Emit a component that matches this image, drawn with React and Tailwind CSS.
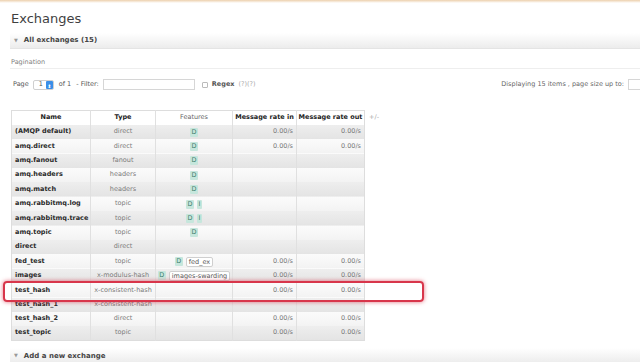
import React from 'react'

// ── Data ──────────────────────────────────────────────────────────────────────

const rows = [
  { name: '(AMQP default)', type: 'direct', feats: ['D'], rin: '0.00/s', rout: '0.00/s' },
  { name: 'amq.direct', type: 'direct', feats: ['D'], rin: '0.00/s', rout: '0.00/s' },
  { name: 'amq.fanout', type: 'fanout', feats: ['D'] },
  { name: 'amq.headers', type: 'headers', feats: ['D'] },
  { name: 'amq.match', type: 'headers', feats: ['D'] },
  { name: 'amq.rabbitmq.log', type: 'topic', feats: ['D', 'I'] },
  { name: 'amq.rabbitmq.trace', type: 'topic', feats: ['D', 'I'] },
  { name: 'amq.topic', type: 'topic', feats: ['D'] },
  { name: 'direct', type: 'direct', feats: [] },
  { name: 'fed_test', type: 'topic', feats: ['D'], policy: 'fed_ex', rin: '0.00/s', rout: '0.00/s' },
  { name: 'images', type: 'x-modulus-hash', feats: ['D'], policy: 'images-swarding', rin: '0.00/s', rout: '0.00/s' },
  { name: 'test_hash', type: 'x-consistent-hash', feats: [], rin: '0.00/s', rout: '0.00/s' },
  { name: 'test_hash_1', type: 'x-consistent-hash', feats: [] },
  { name: 'test_hash_2', type: 'direct', feats: [], rin: '0.00/s', rout: '0.00/s' },
  { name: 'test_topic', type: 'topic', feats: [], rin: '0.00/s', rout: '0.00/s' },
]

// ── Bits ──────────────────────────────────────────────────────────────────────

function Badge({ children }) {
  return (
    <span className="inline-block px-[1.5px] leading-[9px] bg-[#c6e6dc] text-[#3f7f6e] rounded-[1px]">
      {children}
    </span>
  )
}

function Policy({ children }) {
  return (
    <span className="inline-block px-[2px] leading-[8px] border border-[#cfcfcf] bg-white text-[#555] rounded-[2px] whitespace-nowrap">
      {children}
    </span>
  )
}

function SectionBar({ label }) {
  return (
    <div className="ml-[10px] h-[16px] flex items-center bg-gradient-to-b from-white to-[#ececec] border-b border-[#e4e4e4]">
      <span className="ml-[4px] text-[5px] text-[#999]">▼</span>
      <span className="ml-[6px] text-[7px] font-bold text-[#444]">{label}</span>
    </div>
  )
}

// ── Main ──────────────────────────────────────────────────────────────────────

export default function App() {
  return (
    <div className="w-[640px] h-[362px] overflow-hidden bg-white relative font-['DejaVu_Sans',sans-serif] text-[#444]">
      <div className="h-[3px] bg-gradient-to-b from-[#ecd0ad] to-white" />

      <h1 className="h-[30px] pt-[8px] pl-[11px] text-[13px] leading-[16px] text-[#3f3f3f]">Exchanges</h1>

      <SectionBar label="All exchanges (15)" />

      {/* Pagination */}
      <div className="ml-[10px] pt-[9px] pb-[2px] border-b border-[#eeeeee] text-[6.5px] leading-[8px] text-[#808080] pl-[1px]">
        Pagination
      </div>

      <div className="mt-[10px] h-[11px] flex items-center text-[6.5px] text-[#555]">
        <span className="ml-[13px]">Page</span>
        <span className="ml-[4px] w-[21px] h-[10px] flex items-center border border-[#d0d0d0] rounded-[2px] bg-white">
          <span className="ml-[5px]">1</span>
          <span className="ml-auto w-[7px] h-full bg-[#3b8fe8] rounded-[1px] text-white text-[5px] leading-[10px] text-center">⬍</span>
        </span>
        <span className="ml-[5px]">of 1</span>
        <span className="ml-[5px]">- Filter:</span>
        <span className="ml-[4px] w-[92px] h-[11px] border border-[#d6d6d6] bg-white" />
        <span className="ml-[7px] w-[6px] h-[6px] border border-[#bbb] bg-white rounded-[1px]" />
        <span className="ml-[4px] font-bold text-[#555]">Regex</span>
        <span className="ml-[4px] text-[#aaa]">(?)(?)</span>
        <span className="ml-auto text-[#666]">Displaying 15 items , page size up to:</span>
        <span className="ml-[4px] w-[12px] h-[11px] border border-r-0 border-[#d6d6d6] bg-white" />
      </div>

      {/* Table */}
      <div className="mt-[20px] ml-[11px] flex items-start">
        <table className="table-fixed border-collapse w-[353px] text-[6.5px] border border-[#dddddd]">
          <colgroup>
            <col className="w-[79px]" />
            <col className="w-[65px]" />
            <col className="w-[77px]" />
            <col className="w-[64px]" />
            <col className="w-[68px]" />
          </colgroup>
          <thead>
            <tr className="h-[14.4px] bg-white text-[#222]">
              <th className="font-bold text-center border-r border-[#e0e0e0]">Name</th>
              <th className="font-bold text-center border-r border-[#e0e0e0]">Type</th>
              <th className="font-normal text-center text-[#666] border-r border-[#e0e0e0]">Features</th>
              <th className="font-bold text-center border-r border-[#e0e0e0] whitespace-nowrap">Message rate in</th>
              <th className="font-bold text-center whitespace-nowrap">Message rate out</th>
            </tr>
          </thead>
          <tbody>
            {rows.map((r, i) => (
              <tr
                key={r.name}
                className={
                  i % 2 === 0
                    ? 'h-[14.4px] bg-gradient-to-b from-[#eeeeee] to-[#e4e4e4]'
                    : 'h-[14.4px] bg-gradient-to-b from-[#fbfbfb] to-[#f3f3f3]'
                }
              >
                <td className="pl-[3px] font-bold text-[#2a2a2a] whitespace-nowrap border-r border-[#e0e0e0] p-0">{r.name}</td>
                <td className="text-center text-[#7a7a7a] whitespace-nowrap border-r border-[#e0e0e0] p-0">{r.type}</td>
                <td className="border-r border-[#e0e0e0] p-0 whitespace-nowrap overflow-visible">
                  <div className="flex items-center gap-[3px] justify-center">
                    {r.feats.map((f) => (
                      <Badge key={f}>{f}</Badge>
                    ))}
                    {r.policy && <Policy>{r.policy}</Policy>}
                  </div>
                </td>
                <td className="text-right pr-[3px] text-[#7a7a7a] border-r border-[#e0e0e0] p-0">{r.rin}</td>
                <td className="text-right pr-[3px] text-[#7a7a7a] p-0">{r.rout}</td>
              </tr>
            ))}
          </tbody>
        </table>
        <span className="ml-[4px] mt-[3px] text-[6.5px] text-[#aaa]">+/-</span>
      </div>

      <div className="mt-[7px]">
        <SectionBar label="Add a new exchange" />
      </div>

      {/* Highlight */}
      <div className="absolute left-[3px] top-[281px] w-[421px] h-[21px] border-2 border-[#d8364b] rounded-[4px] shadow-[0_0_4px_rgba(216,54,75,0.7)]" />
    </div>
  )
}
